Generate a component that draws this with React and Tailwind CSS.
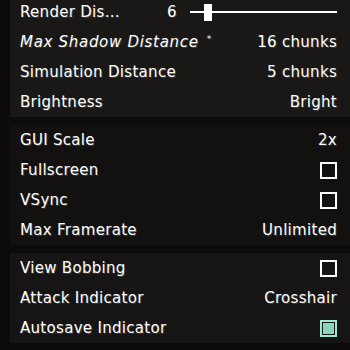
import React from "react";

const font = { fontFamily: '"DejaVu Sans", "Liberation Sans", sans-serif' };

const Box = ({ checked }) =>
  checked ? (
    <div className="w-[17px] h-[17px] border-2 border-[#9ee8d2] p-[1px]">
      <div className="w-full h-full bg-[#86d6bf]" />
    </div>
  ) : (
    <div className="w-[17px] h-[17px] border-2 border-white" />
  );

const Row = ({ label, value, italic, star, children }) => (
  <div className="h-[30px] flex items-center justify-between pl-[10px] pr-[13px]">
    <span
      className={`text-[15px] text-white [text-shadow:1px_1px_0_#3a3a3a] ${italic ? "italic tracking-[0.7px]" : "tracking-[0.3px]"}`}
    >
      {label}
      {star && <sup className="ml-[8px] text-[9px] not-italic">*</sup>}
    </span>
    {children || (
      <span className="text-[15px] text-white tracking-[0.3px] [text-shadow:1px_1px_0_#3a3a3a]">
        {value}
      </span>
    )}
  </div>
);

export default function App() {
  return (
    <div className="w-[350px] h-[350px] overflow-hidden bg-[#0d0a0a]" style={font}>
      <div className="-mt-[3px] ml-[10px] flex flex-col gap-[8px]">
        <div className="bg-[#1a1717]">
          <div className="h-[30px] flex items-center pl-[10px] pr-[13px]">
            <span className="text-[15px] text-white tracking-[0.3px] [text-shadow:1px_1px_0_#3a3a3a]">
              Render Dis...
            </span>
            <span className="ml-[47px] text-[15px] text-white [text-shadow:1px_1px_0_#3a3a3a]">6</span>
            <div className="relative ml-[14px] flex-1 h-[30px] flex items-center">
              <div className="w-full h-[2px] bg-white" />
              <div className="absolute left-[14px] top-[7px] w-[8px] h-[17px] bg-white" />
            </div>
          </div>
          <Row label="Max Shadow Distance" italic star value="16 chunks" />
          <Row label="Simulation Distance" value="5 chunks" />
          <Row label="Brightness" value="Bright" />
        </div>
        <div className="bg-[#131010]">
          <Row label="GUI Scale" value="2x" />
          <Row label="Fullscreen">
            <Box />
          </Row>
          <Row label="VSync">
            <Box />
          </Row>
          <Row label="Max Framerate" value="Unlimited" />
        </div>
        <div className="bg-[#161414]">
          <Row label="View Bobbing">
            <Box />
          </Row>
          <Row label="Attack Indicator" value="Crosshair" />
          <Row label="Autosave Indicator">
            <Box checked />
          </Row>
        </div>
      </div>
    </div>
  );
}
